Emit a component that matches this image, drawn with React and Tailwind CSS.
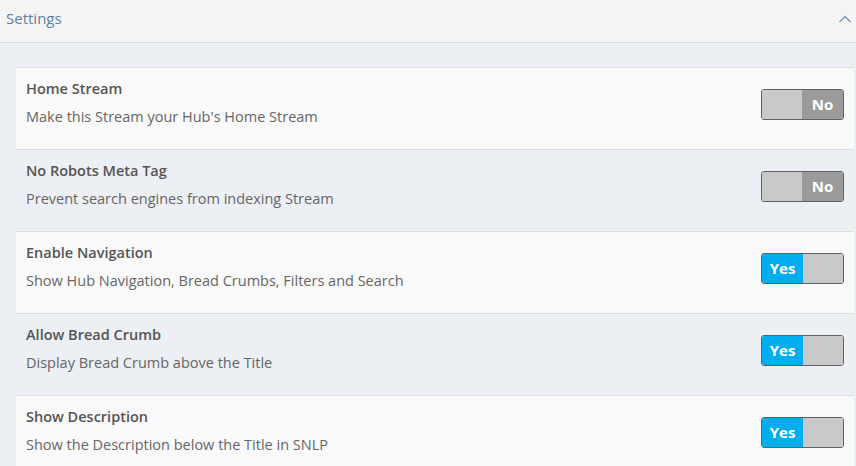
import React from 'react';

const ROWS = [
  { title: 'Home Stream', desc: "Make this Stream your Hub's Home Stream", on: false },
  { title: 'No Robots Meta Tag', desc: 'Prevent search engines from indexing Stream', on: false },
  { title: 'Enable Navigation', desc: 'Show Hub Navigation, Bread Crumbs, Filters and Search', on: true },
  { title: 'Allow Bread Crumb', desc: 'Display Bread Crumb above the Title', on: true },
  { title: 'Show Description', desc: 'Show the Description below the Title in SNLP', on: true },
];

function Toggle({ on }) {
  return (
    <div className="flex w-[83px] h-[31px] rounded-[3px] border border-[#5f6264] overflow-hidden">
      {on ? (
        <>
          <div className="w-[41px] bg-[#00aeef] flex items-center justify-center text-white font-bold text-[15px]">Yes</div>
          <div className="flex-1 bg-[#c9c9c9]" />
        </>
      ) : (
        <>
          <div className="w-[40px] bg-[#c9c9c9]" />
          <div className="flex-1 bg-[#9b9b9b] flex items-center justify-center text-white font-bold text-[15px]">No</div>
        </>
      )}
    </div>
  );
}

export default function App() {
  return (
    <div className="w-[856px] h-[466px] overflow-hidden bg-[#eceff3]" style={{ fontFamily: '"Open Sans", "Noto Sans", sans-serif' }}>
      {/* Header */}
      <div className="h-[43px] bg-[#f4f4f4] border-b border-[#d9dce0] flex items-start justify-between pl-[6px] pr-[4px] pt-[7px]">
        <span className="text-[15px] leading-[22px] text-[#5f82a3]">Settings</span>
        <svg width="14" height="10" viewBox="0 0 14 10" fill="none" className="mt-[7px]">
          <path d="M1.5 8 L7 2.5 L12.5 8" stroke="#7d9dba" strokeWidth="1.5" />
        </svg>
      </div>

      <div className="pl-[16px] pr-[2px] pt-[24px]">
        <div className="border-t border-[#dadde1]">
          {ROWS.map((r, i) => (
            <div
              key={r.title}
              className={`h-[82px] flex justify-between border-b border-[#dadde1] pl-[10px] pr-[10px] ${i % 2 === 0 ? 'bg-[#f9f9f9]' : 'bg-[#eceff3]'}`}
            >
              <div className="pt-[11px]">
                <div className="text-[14.5px] font-semibold text-[#555] leading-[20px]">{r.title}</div>
                <div className="text-[14.5px] text-[#666] leading-[20px] mt-[8px]">{r.desc}</div>
              </div>
              <div className="pt-[21px]">
                <Toggle on={r.on} />
              </div>
            </div>
          ))}
        </div>
      </div>
    </div>
  );
}
